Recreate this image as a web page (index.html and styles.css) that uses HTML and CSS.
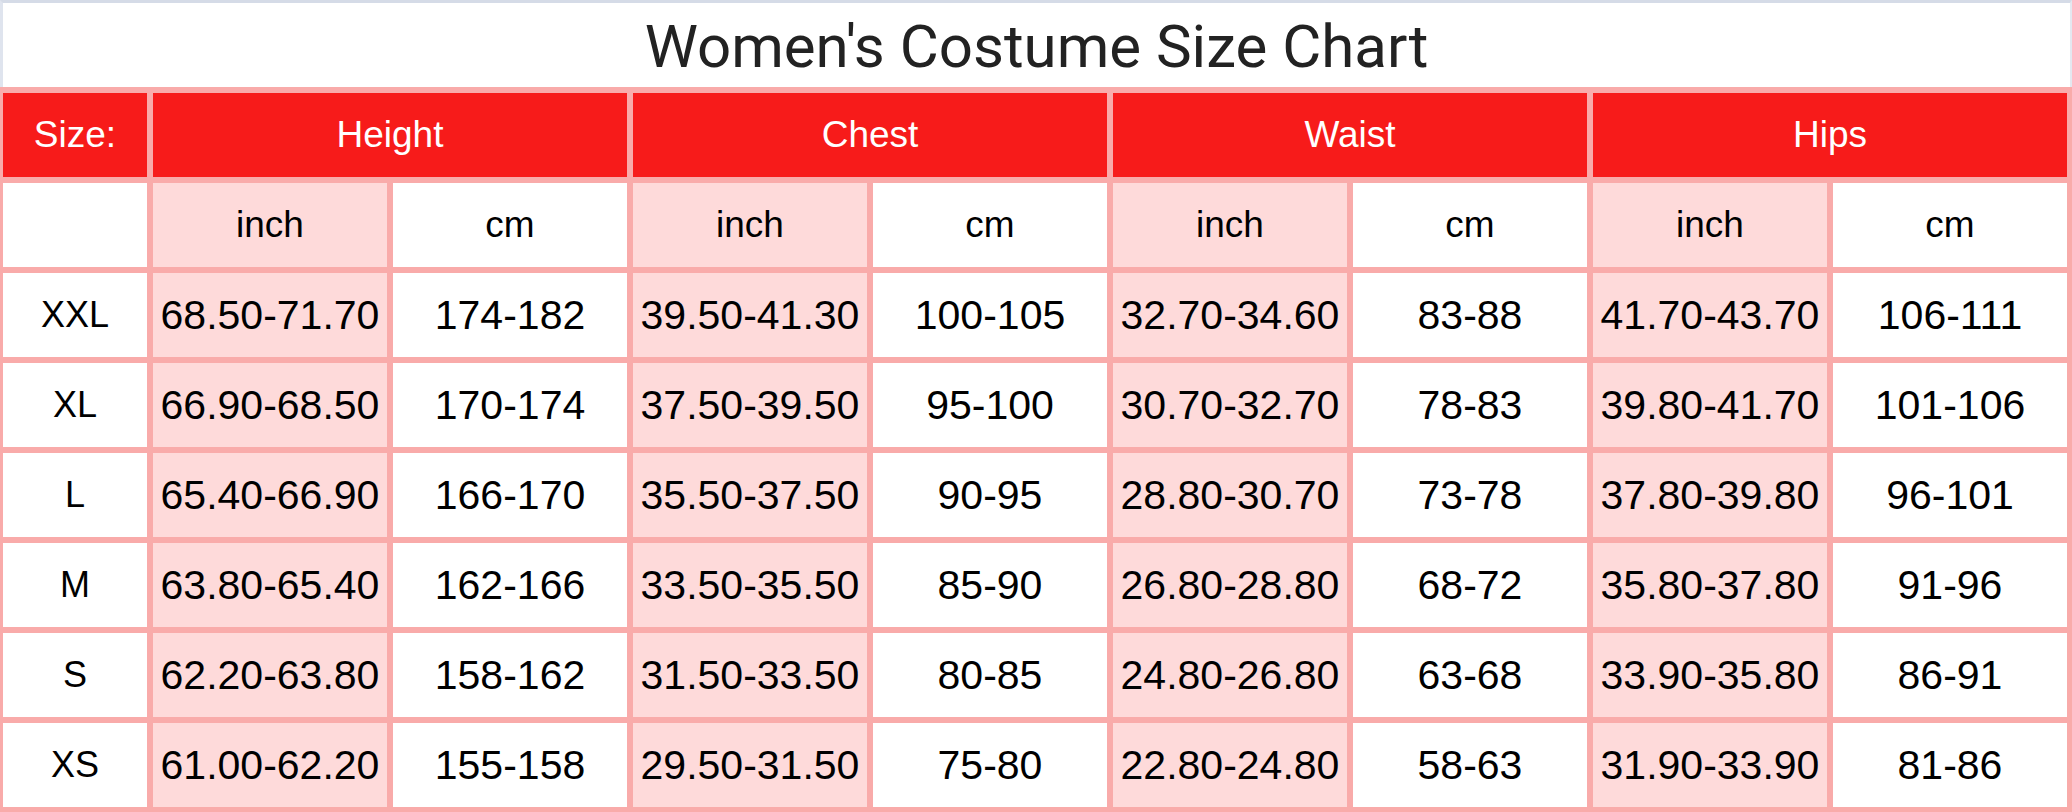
FILE: index.html
```html
<!DOCTYPE html>
<html lang="en">
<head>
<meta charset="utf-8">
<title>Women's Costume Size Chart</title>
<link rel="stylesheet" href="styles.css">
</head>
<body>
<div class="page">
  <div class="title">Women's Costume Size Chart</div>
  <div class="chart">
    <div class="hd">Size:</div>
    <div class="hd span2">Height</div>
    <div class="hd span2">Chest</div>
    <div class="hd span2">Waist</div>
    <div class="hd span2">Hips</div>

    <div class="c sub"></div>
    <div class="c sub in">inch</div><div class="c sub">cm</div>
    <div class="c sub in">inch</div><div class="c sub">cm</div>
    <div class="c sub in">inch</div><div class="c sub">cm</div>
    <div class="c sub in">inch</div><div class="c sub">cm</div>

    <div class="c sz">XXL</div>
    <div class="c in">68.50-71.70</div><div class="c">174-182</div>
    <div class="c in">39.50-41.30</div><div class="c">100-105</div>
    <div class="c in">32.70-34.60</div><div class="c">83-88</div>
    <div class="c in">41.70-43.70</div><div class="c">106-111</div>

    <div class="c sz">XL</div>
    <div class="c in">66.90-68.50</div><div class="c">170-174</div>
    <div class="c in">37.50-39.50</div><div class="c">95-100</div>
    <div class="c in">30.70-32.70</div><div class="c">78-83</div>
    <div class="c in">39.80-41.70</div><div class="c">101-106</div>

    <div class="c sz">L</div>
    <div class="c in">65.40-66.90</div><div class="c">166-170</div>
    <div class="c in">35.50-37.50</div><div class="c">90-95</div>
    <div class="c in">28.80-30.70</div><div class="c">73-78</div>
    <div class="c in">37.80-39.80</div><div class="c">96-101</div>

    <div class="c sz">M</div>
    <div class="c in">63.80-65.40</div><div class="c">162-166</div>
    <div class="c in">33.50-35.50</div><div class="c">85-90</div>
    <div class="c in">26.80-28.80</div><div class="c">68-72</div>
    <div class="c in">35.80-37.80</div><div class="c">91-96</div>

    <div class="c sz">S</div>
    <div class="c in">62.20-63.80</div><div class="c">158-162</div>
    <div class="c in">31.50-33.50</div><div class="c">80-85</div>
    <div class="c in">24.80-26.80</div><div class="c">63-68</div>
    <div class="c in">33.90-35.80</div><div class="c">86-91</div>

    <div class="c sz">XS</div>
    <div class="c in">61.00-62.20</div><div class="c">155-158</div>
    <div class="c in">29.50-31.50</div><div class="c">75-80</div>
    <div class="c in">22.80-24.80</div><div class="c">58-63</div>
    <div class="c in">31.90-33.90</div><div class="c">81-86</div>
  </div>
</div>
</body>
</html>
```
FILE: styles.css
```css
html, body {
  margin: 0;
  padding: 0;
  background: #ffffff;
}
.page {
  width: 2072px;
  height: 812px;
  overflow: hidden;
  font-family: "Liberation Sans", Arial, sans-serif;
}
.title {
  box-sizing: border-box;
  height: 87px;
  border-top: 3px solid #d5dbe7;
  border-left: 3px solid #dfe4ee;
  border-right: 2px solid #e4e8f0;
  display: flex;
  align-items: center;
  justify-content: center;
  font-family: Roboto, "Liberation Sans", sans-serif;
  font-size: 60px;
  color: #222222;
  padding-top: 2px;
}
.chart {
  display: grid;
  grid-template-columns: 144px repeat(8, 234px);
  grid-template-rows: repeat(8, 84px);
  gap: 6px;
  padding: 6px 5px 5px 3px;
  background: #f9abaa;
}
.hd {
  background: #f71b1a;
  color: #ffffff;
  font-size: 37px;
  display: flex;
  align-items: center;
  justify-content: center;
}
.span2 {
  grid-column: span 2;
}
.c {
  background: #ffffff;
  color: #000000;
  font-size: 41px;
  display: flex;
  align-items: center;
  justify-content: center;
}
.c.in {
  background: #fedada;
}
.sub {
  font-size: 37px;
}
.sz {
  font-size: 36px;
}
```
